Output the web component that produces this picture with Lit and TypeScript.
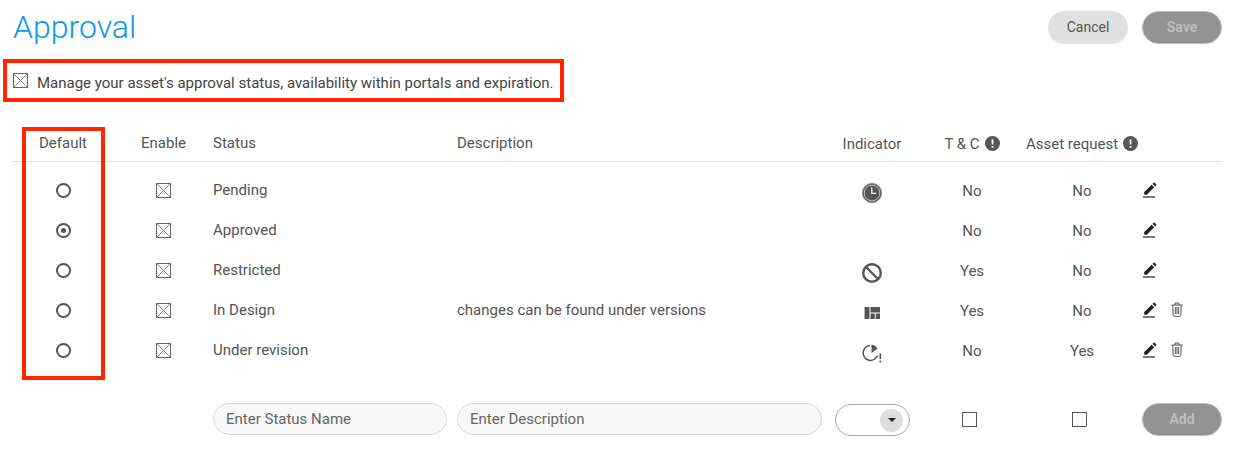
import { LitElement, html, css, svg } from "lit";
import { customElement } from "lit/decorators.js";

const statuses = [
  { name: "Pending", description: "", indicator: "clock", tc: "No", request: "No", selected: false, removable: false },
  { name: "Approved", description: "", indicator: "", tc: "No", request: "No", selected: true, removable: false },
  { name: "Restricted", description: "", indicator: "ban", tc: "Yes", request: "No", selected: false, removable: false },
  { name: "In Design", description: "changes can be found under versions", indicator: "quilt", tc: "Yes", request: "No", selected: false, removable: true },
  { name: "Under revision", description: "", indicator: "revision", tc: "No", request: "Yes", selected: false, removable: true },
];

const indicators: Record<string, unknown> = {
  clock: svg`<svg width="22" height="22" viewBox="0 0 22 22"><circle cx="11" cy="11" r="9.6" fill="#555" stroke="#8a8a8a" stroke-width="1"/><circle cx="11" cy="11" r="7.8" fill="none" stroke="#ddd" stroke-width=".8"/><path d="M10.8 5.6v5.8h4.4" fill="none" stroke="#fff" stroke-width="1.2"/></svg>`,
  ban: svg`<svg width="22" height="22" viewBox="0 0 22 22"><circle cx="11" cy="11" r="8.8" fill="none" stroke="#555" stroke-width="2.4"/><path d="M5 5l12 12" stroke="#555" stroke-width="2.4"/></svg>`,
  quilt: svg`<svg width="22" height="22" viewBox="0 0 22 22"><path fill="#555" d="M3.5 5h5v12h-5zM9.5 5H19v5.500H9.500zM9.500 11.500h4.300V17H9.500zM14.800 11.500H19V17h-4.200z"/></svg>`,
  revision: svg`<svg width="22" height="22" viewBox="0 0 22 22"><path d="M9 3.600A7.400 7.400 0 1 0 16.500 13.500" fill="none" stroke="#555" stroke-width="1.500"/><path d="M10.500 2.800c2.700.1 5 1.600 6 3.900l-6 4.300z" fill="#555"/><path d="M19.300 11.500V17M19.300 18.400v2" stroke="#555" stroke-width="1.600"/></svg>`,
};

const crossBox = html`<svg width="15" height="15" viewBox="0 0 15 15"><rect x=".5" y=".5" width="14" height="14" fill="none" stroke="#666"/><path d="M1 1l13 13M14 1L1 14" stroke="#777" stroke-width=".9"/></svg>`;

const pencil = html`<svg class="pencil" width="14" height="16" viewBox="0 0 14 16"><path fill="#222" d="M1.200 10.100 8.600 2.700l2.600 2.600-7.400 7.400H1.200zM9.500 1.800l1.100-1.100a.7.7 0 0 1 1 0l1.600 1.600a.7.7 0 0 1 0 1l-1.100 1.100z"/><path d="M0 15h12" stroke="#222" stroke-width="1.200"/></svg>`;

const trash = html`<svg class="trash" width="12" height="15" viewBox="0 0 12 15"><path fill="none" stroke="#555" stroke-width="1" d="M.5 3h11M4.200 3V1h3.600v2M1.800 3l.4 10.200c0 .7.5 1.100 1 1.100h5.600c.5 0 1-.4 1-1.100L10.200 3M4.300 5v7M6 5v7M7.700 5v7"/></svg>`;

const info = html`<svg width="15" height="15" viewBox="0 0 15 15"><circle cx="7.500" cy="7.500" r="7.500" fill="#555"/><path d="M7.500 3.200v5.200M7.500 10v1.700" stroke="#fff" stroke-width="1.800"/></svg>`;

@customElement("app-root")
export class AppRoot extends LitElement {
  static styles = css`
    :host {
      display: block;
      position: relative;
      width: 1246px;
      height: 454px;
      overflow: hidden;
      background: #fff;
      color: #555;
      font-family: Roboto, "Liberation Sans", sans-serif;
      font-size: 15px;
    }

    .top {
      display: flex;
      justify-content: space-between;
      height: 33px;
      padding: 11px 24px 0 13px;
    }

    h1 {
      margin: 0;
      color: #0c96e8;
      font-size: 32px;
      line-height: 32px;
      font-weight: 300;
    }

    .actions {
      display: flex;
      gap: 14px;
    }

    .btn {
      display: flex;
      align-items: center;
      justify-content: center;
      box-sizing: border-box;
      width: 80px;
      height: 33px;
      padding-bottom: 1px;
      border-radius: 17px;
      font-size: 14px;
    }

    .cancel {
      background: #e0e0e0;
      color: #555;
    }

    .disabled {
      background: #939393;
      border: 1px solid #bbb;
      color: #bdbdbd;
      font-weight: 700;
    }

    .notice {
      display: inline-flex;
      align-items: center;
      gap: 9px;
      box-sizing: border-box;
      height: 43px;
      margin: 15px 0 0 3px;
      padding: 0 6px 0 6px;
      border: 4px solid #ff2600;
      color: #444;
    }

    .notice span {
      padding-top: 5px;
    }

    .table {
      margin: 26px 24px 0 12px;
    }

    .row {
      display: grid;
      grid-template-columns: 102px 99px 244px 365px 100px 100px 120px 80px;
      align-items: center;
    }

    .head {
      height: 34px;
      padding-bottom: 3px;
      border-bottom: 1px solid #ddd;
      box-sizing: border-box;
    }

    .rows {
      padding-top: 8px;
    }

    .body {
      height: 40px;
    }

    .center {
      display: flex;
      align-items: center;
      justify-content: center;
    }

    .enable {
      padding-right: 1px;
    }

    .value {
      padding-top: 2px;
    }

    .label {
      padding-bottom: 1px;
    }

    .head-label {
      gap: 5px;
      padding-top: 1px;
    }

    .indicator {
      padding-top: 6px;
    }

    .radio {
      box-sizing: border-box;
      display: flex;
      align-items: center;
      justify-content: center;
      width: 15px;
      height: 15px;
      border: 2px solid #555;
      border-radius: 50%;
    }

    .radio.on::after {
      content: "";
      width: 5px;
      height: 5px;
      border-radius: 50%;
      background: #555;
    }

    .tools {
      display: flex;
      align-items: center;
      gap: 14px;
      height: 20px;
    }

    .pencil {
      margin-left: 1px;
    }

    .trash {
      margin-top: -2px;
    }

    .add {
      height: 33px;
      margin-top: 32px;
    }

    .input {
      display: flex;
      align-items: center;
      box-sizing: border-box;
      height: 32px;
      padding: 0 12px;
      border: 1px solid #d8d8d8;
      border-radius: 16px;
      background: #f8f8f8;
      color: #666;
    }

    .status-input {
      width: 234px;
    }

    .description-input {
      width: 365px;
    }

    .select {
      display: flex;
      align-items: center;
      justify-content: flex-end;
      box-sizing: border-box;
      width: 75px;
      height: 32px;
      margin: 2px 0 0 13px;
      padding-right: 6px;
      border: 1px solid #aaa;
      border-radius: 16px;
    }

    .arrow {
      display: flex;
      align-items: center;
      justify-content: center;
      width: 23px;
      height: 23px;
      border-radius: 50%;
      background: #ddd;
    }

    .arrow::after {
      content: "";
      border-left: 4px solid transparent;
      border-right: 4px solid transparent;
      border-top: 4px solid #222;
    }

    .check {
      box-sizing: border-box;
      width: 15px;
      height: 15px;
      margin: 1px 6px 0 0;
      border: 1px solid #555;
    }

    /* annotation drawn on top of the table */
    .mark {
      position: absolute;
      left: 22px;
      top: 127px;
      box-sizing: border-box;
      width: 83px;
      height: 253px;
      border: 4px solid #ff2600;
      pointer-events: none;
    }
  `;

  renderRow(row: (typeof statuses)[number]) {
    return html`
      <div class="row body">
        <div class="center"><span class="radio ${row.selected ? "on" : ""}"></span></div>
        <div class="center enable">${crossBox}</div>
        <div class="label">${row.name}</div>
        <div class="label">${row.description}</div>
        <div class="center indicator">${indicators[row.indicator] ?? ""}</div>
        <div class="center value">${row.tc}</div>
        <div class="center value">${row.request}</div>
        <div class="tools">${pencil}${row.removable ? trash : ""}</div>
      </div>
    `;
  }

  render() {
    return html`
      <div class="top">
        <h1>Approval</h1>
        <div class="actions">
          <div class="btn cancel">Cancel</div>
          <div class="btn disabled">Save</div>
        </div>
      </div>
      <div class="notice">
        ${crossBox}<span>Manage your asset's approval status, availability within portals and expiration.</span>
      </div>
      <div class="table">
        <div class="row head">
          <div class="center">Default</div>
          <div class="center">Enable</div>
          <div>Status</div>
          <div>Description</div>
          <div class="center head-label">Indicator</div>
          <div class="center head-label">T &amp; C ${info}</div>
          <div class="center head-label">Asset request ${info}</div>
          <div></div>
        </div>
        <div class="rows">${statuses.map((row) => this.renderRow(row))}</div>
        <div class="row add">
          <div></div>
          <div></div>
          <div class="input status-input">Enter Status Name</div>
          <div class="input description-input">Enter Description</div>
          <div class="select"><span class="arrow"></span></div>
          <div class="center"><span class="check"></span></div>
          <div class="center"><span class="check"></span></div>
          <div class="btn disabled">Add</div>
        </div>
      </div>
      <div class="mark"></div>
    `;
  }
}
